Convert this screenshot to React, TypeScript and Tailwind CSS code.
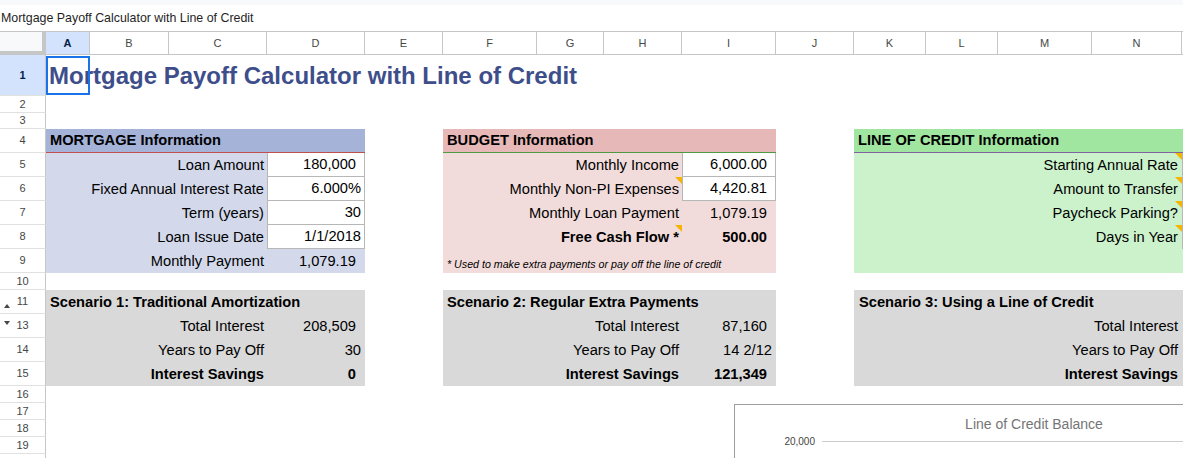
import type { ReactNode } from "react";

const font = "font-['Liberation_Sans',Arial,sans-serif]";

type Col = { l: string; w: string; on?: boolean };

const columns: Col[] = [
  { l: "A", w: "w-[44px]", on: true },
  { l: "B", w: "w-[79px]" },
  { l: "C", w: "w-[98px]" },
  { l: "D", w: "w-[98px]" },
  { l: "E", w: "w-[78px]" },
  { l: "F", w: "w-[94px]" },
  { l: "G", w: "w-[67px]" },
  { l: "H", w: "w-[78px]" },
  { l: "I", w: "w-[94px]" },
  { l: "J", w: "w-[78px]" },
  { l: "K", w: "w-[72px]" },
  { l: "L", w: "w-[72px]" },
  { l: "M", w: "w-[94px]" },
  { l: "N", w: "w-[90px]" },
  { l: "", w: "w-[120px]" },
];

type Row = { n: string; h: string; on?: boolean; mark?: "up" | "down" };

const rows: Row[] = [
  { n: "1", h: "h-[41px]", on: true },
  { n: "2", h: "h-[17px]" },
  { n: "3", h: "h-[16px]" },
  { n: "4", h: "h-[24px]" },
  { n: "5", h: "h-[24px]" },
  { n: "6", h: "h-[24px]" },
  { n: "7", h: "h-[24px]" },
  { n: "8", h: "h-[24px]" },
  { n: "9", h: "h-[24px]" },
  { n: "10", h: "h-[17px]" },
  { n: "11", h: "h-[24px]", mark: "up" },
  { n: "13", h: "h-[24px]", mark: "down" },
  { n: "14", h: "h-[24px]" },
  { n: "15", h: "h-[24px]" },
  { n: "16", h: "h-[17px]" },
  { n: "17", h: "h-[17px]" },
  { n: "18", h: "h-[17px]" },
  { n: "19", h: "h-[17px]" },
];

function TopBar() {
  return (
    <div className="h-[31px] flex flex-col">
      <div className="h-[5px] bg-[#f8f9fa]" />
      <div className="flex-1 flex items-center pl-px text-[12.4px] text-[#1f1f1f]">
        Mortgage Payoff Calculator with Line of Credit
      </div>
    </div>
  );
}

function ColumnHeaders() {
  return (
    <div className="flex h-[24px] border-t border-[#c4c7c5]">
      <div className="w-[46px] shrink-0 bg-[#f8f9fa] border-r-4 border-b-4 border-[#c4c7c5]" />
      {columns.map((c, i) => (
        <div
          key={i}
          className={`${c.w} shrink-0 flex items-center justify-center border-r border-b border-[#c4c7c5] text-[11px] ${
            c.on ? "bg-[#d3e3fd] font-bold text-[#041e49]" : "bg-white text-[#444746]"
          }`}
        >
          {c.l}
        </div>
      ))}
    </div>
  );
}

function RowHeaders() {
  return (
    <div className="w-[46px] shrink-0 flex flex-col">
      {rows.map((r) => (
        <div
          key={r.n}
          className={`${r.h} relative flex items-center justify-center border-r border-b border-r-[#c4c7c5] border-b-[#e1e1e1] text-[11px] ${
            r.on ? "bg-[#d3e3fd] font-bold text-[#041e49]" : "bg-white text-[#444746]"
          }`}
        >
          {r.mark === "up" && (
            <span className="absolute left-[4px] bottom-[5px] border-x-[3px] border-x-transparent border-b-[4px] border-b-[#444746]" />
          )}
          {r.mark === "down" && (
            <span className="absolute left-[4px] top-[7px] border-x-[3px] border-x-transparent border-t-[4px] border-t-[#444746]" />
          )}
          {r.n}
        </div>
      ))}
      <div className="h-[17px] border-r border-[#c4c7c5]" />
    </div>
  );
}

// orange comment marker in a cell's top-right corner
function Note() {
  return (
    <span className="absolute right-0 top-0 border-l-[7px] border-l-transparent border-t-[7px] border-t-[#f4b400]" />
  );
}

function Cell({ className, children, note }: { className: string; children?: ReactNode; note?: boolean }) {
  return (
    <div className={`relative flex items-center text-[14.67px] leading-[17px] text-black whitespace-nowrap ${className}`}>
      {children}
      {note && <Note />}
    </div>
  );
}

function Chart() {
  return (
    <div className="absolute left-[688px] top-[349px] w-[600px] h-[300px] bg-white border border-[#9e9e9e] flex flex-col">
      <div className="pt-[11px] text-center text-[14px] leading-[16px] text-[#757575]">Line of Credit Balance</div>
      <div className="mt-[3px] flex items-center h-[12px]">
        <div className="w-[80px] text-right text-[10px] text-[#444]">20,000</div>
        <div className="ml-[7px] flex-1 h-px bg-[#cccccc]" />
      </div>
    </div>
  );
}

function Sheet() {
  return (
    <div className="relative shrink-0 grid grid-cols-[44px_79px_98px_98px_78px_94px_67px_78px_94px_78px_72px_72px_94px_90px_120px] grid-rows-[41px_17px_16px_24px_24px_24px_24px_24px_24px_17px_24px_24px_24px_24px_17px_17px_17px_17px_17px]">
      <div className="col-start-1 col-span-15 row-start-1 flex items-center pl-[3px] whitespace-nowrap text-[24px] font-bold text-[#3d4e8a]">
        Mortgage Payoff Calculator with Line of Credit
      </div>
      <div className="col-start-1 row-start-1 my-px border-2 border-[#1a73e8]" />

      {/* mortgage */}
      <Cell className="col-start-1 col-span-4 row-start-4 pl-[4px] font-bold bg-[#a5b3d9] border-b border-[#c0504d]">
        MORTGAGE Information
      </Cell>
      <div className="col-start-1 col-span-4 row-start-5 row-span-5 bg-[#d3d9eb]" />
      <Cell className="col-start-1 col-span-3 row-start-5 justify-end pr-[3px]">Loan Amount</Cell>
      <Cell className="col-start-1 col-span-3 row-start-6 justify-end pr-[3px]">Fixed Annual Interest Rate</Cell>
      <Cell className="col-start-1 col-span-3 row-start-7 justify-end pr-[3px]">Term (years)</Cell>
      <Cell className="col-start-1 col-span-3 row-start-8 justify-end pr-[3px]">Loan Issue Date</Cell>
      <Cell className="col-start-1 col-span-3 row-start-9 justify-end pr-[3px]">Monthly Payment</Cell>
      <Cell className="col-start-4 row-start-5 justify-end pr-[8px] bg-white border-x border-b border-[#b7b7b7]">180,000</Cell>
      <Cell className="col-start-4 row-start-6 justify-end pr-[3px] bg-white border-x border-b border-[#b7b7b7]">6.000%</Cell>
      <Cell className="col-start-4 row-start-7 justify-end pr-[3px] bg-white border-x border-b border-[#b7b7b7]">30</Cell>
      <Cell className="col-start-4 row-start-8 justify-end pr-[3px] bg-white border-x border-b border-[#b7b7b7]">1/1/2018</Cell>
      <Cell className="col-start-4 row-start-9 justify-end pr-[9px]">1,079.19</Cell>

      {/* budget */}
      <Cell className="col-start-6 col-span-4 row-start-4 pl-[4px] font-bold bg-[#e6b8b7] border-b border-[#4e9a42]">
        BUDGET Information
      </Cell>
      <div className="col-start-6 col-span-4 row-start-5 row-span-5 bg-[#f2dcdb]" />
      <Cell className="col-start-6 col-span-3 row-start-5 justify-end pr-[3px]">Monthly Income</Cell>
      <Cell note className="col-start-6 col-span-3 row-start-6 justify-end pr-[3px]">Monthly Non-PI Expenses</Cell>
      <Cell className="col-start-6 col-span-3 row-start-7 justify-end pr-[3px]">Monthly Loan Payment</Cell>
      <Cell note className="col-start-6 col-span-3 row-start-8 justify-end pr-[3px] font-bold">Free Cash Flow *</Cell>
      <Cell className="col-start-9 row-start-5 justify-end pr-[8px] bg-white border-x border-b border-[#b7b7b7]">6,000.00</Cell>
      <Cell className="col-start-9 row-start-6 justify-end pr-[8px] bg-white border-x border-b border-[#b7b7b7]">4,420.81</Cell>
      <Cell className="col-start-9 row-start-7 justify-end pr-[9px]">1,079.19</Cell>
      <Cell className="col-start-9 row-start-8 justify-end pr-[9px] font-bold">500.00</Cell>
      <div className="col-start-6 col-span-4 row-start-9 flex items-end pb-[3px] pl-[4px] text-[10.67px] leading-[12px] italic text-black whitespace-nowrap">
        * Used to make extra payments or pay off the line of credit
      </div>

      {/* line of credit */}
      <Cell className="col-start-11 col-span-5 row-start-4 pl-[4px] font-bold bg-[#a0e6a0] border-b border-[#8064a2]">
        LINE OF CREDIT Information
      </Cell>
      <div className="col-start-11 col-span-5 row-start-5 row-span-5 bg-[#ccf2cc]" />
      <Cell note className="col-start-11 col-span-4 row-start-5 justify-end pr-[4px]">Starting Annual Rate</Cell>
      <Cell note className="col-start-11 col-span-4 row-start-6 justify-end pr-[4px]">Amount to Transfer</Cell>
      <Cell note className="col-start-11 col-span-4 row-start-7 justify-end pr-[4px]">Paycheck Parking?</Cell>
      <Cell note className="col-start-11 col-span-4 row-start-8 justify-end pr-[4px]">Days in Year</Cell>
      <div className="col-start-15 row-start-5 bg-white border-x border-b border-[#b7b7b7]" />
      <div className="col-start-15 row-start-6 bg-white border-x border-b border-[#b7b7b7]" />
      <div className="col-start-15 row-start-7 bg-white border-x border-b border-[#b7b7b7]" />
      <div className="col-start-15 row-start-8 bg-white border-x border-b border-[#b7b7b7]" />

      {/* scenario 1 */}
      <div className="col-start-1 col-span-4 row-start-11 row-span-4 bg-[#d9d9d9]" />
      <Cell className="col-start-1 col-span-4 row-start-11 pl-[4px] font-bold">Scenario 1: Traditional Amortization</Cell>
      <Cell className="col-start-1 col-span-3 row-start-12 justify-end pr-[3px]">Total Interest</Cell>
      <Cell className="col-start-1 col-span-3 row-start-13 justify-end pr-[3px]">Years to Pay Off</Cell>
      <Cell className="col-start-1 col-span-3 row-start-14 justify-end pr-[3px] font-bold">Interest Savings</Cell>
      <Cell className="col-start-4 row-start-12 justify-end pr-[9px]">208,509</Cell>
      <Cell className="col-start-4 row-start-13 justify-end pr-[4px]">30</Cell>
      <Cell className="col-start-4 row-start-14 justify-end pr-[9px] font-bold">0</Cell>

      {/* scenario 2 */}
      <div className="col-start-6 col-span-4 row-start-11 row-span-4 bg-[#d9d9d9]" />
      <Cell className="col-start-6 col-span-4 row-start-11 pl-[4px] font-bold">Scenario 2: Regular Extra Payments</Cell>
      <Cell className="col-start-6 col-span-3 row-start-12 justify-end pr-[3px]">Total Interest</Cell>
      <Cell className="col-start-6 col-span-3 row-start-13 justify-end pr-[3px]">Years to Pay Off</Cell>
      <Cell className="col-start-6 col-span-3 row-start-14 justify-end pr-[3px] font-bold">Interest Savings</Cell>
      <Cell className="col-start-9 row-start-12 justify-end pr-[9px]">87,160</Cell>
      <Cell className="col-start-9 row-start-13 justify-end pr-[4px]">14 2/12</Cell>
      <Cell className="col-start-9 row-start-14 justify-end pr-[9px] font-bold">121,349</Cell>

      {/* scenario 3 */}
      <div className="col-start-11 col-span-5 row-start-11 row-span-4 bg-[#d9d9d9]" />
      <Cell className="col-start-11 col-span-5 row-start-11 pl-[5px] font-bold">Scenario 3: Using a Line of Credit</Cell>
      <Cell className="col-start-11 col-span-4 row-start-12 justify-end pr-[4px]">Total Interest</Cell>
      <Cell className="col-start-11 col-span-4 row-start-13 justify-end pr-[4px]">Years to Pay Off</Cell>
      <Cell className="col-start-11 col-span-4 row-start-14 justify-end pr-[4px] font-bold">Interest Savings</Cell>

      <Chart />
    </div>
  );
}

export default function App() {
  return (
    <div className={`w-[1183px] h-[458px] overflow-hidden bg-white ${font}`}>
      <TopBar />
      <ColumnHeaders />
      <div className="flex">
        <RowHeaders />
        <Sheet />
      </div>
    </div>
  );
}
